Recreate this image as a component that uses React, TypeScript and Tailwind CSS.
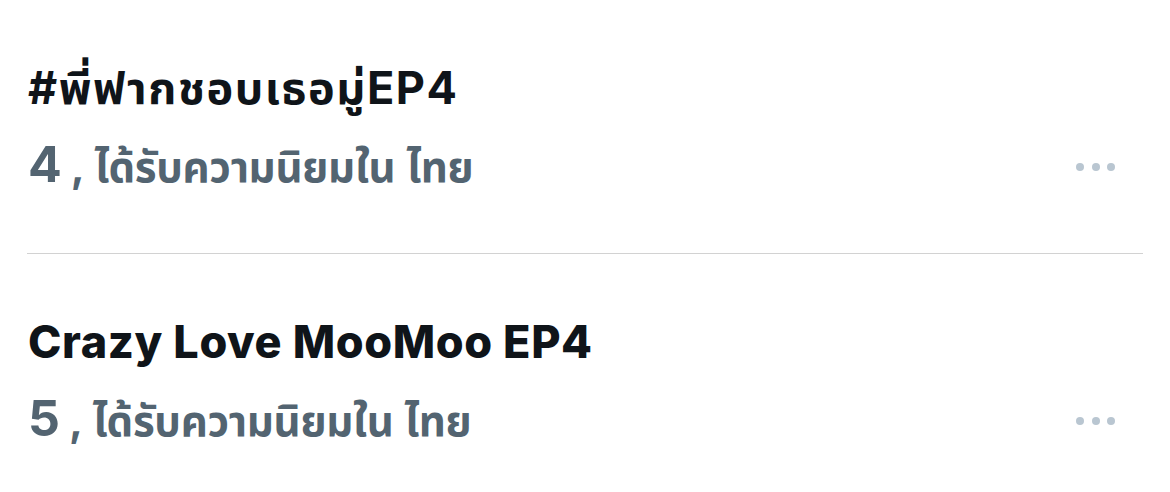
import React from "react";

type Trend = { rank: number; title: string; place: string; thai: boolean };

const trends: Trend[] = [
  { rank: 4, title: "#พี่ฟากชอบเธอมู่EP4", place: "ไทย", thai: true },
  { rank: 5, title: "Crazy Love MooMoo EP4", place: "ไทย", thai: false },
];

const font = {
  fontFamily:
    'Inter, "Noto Sans", "Noto Sans Thai", "Liberation Sans", sans-serif',
};

function MoreDots() {
  return (
    <div className="flex items-center gap-[7.5px]">
      <span className="block h-[8px] w-[8px] rounded-full bg-[#b9c6d1]" />
      <span className="block h-[8px] w-[8px] rounded-full bg-[#b9c6d1]" />
      <span className="block h-[8px] w-[8px] rounded-full bg-[#b9c6d1]" />
    </div>
  );
}

function TrendRow({ trend }: { trend: Trend }) {
  return (
    <div className="flex h-[253px] items-start pl-[28px] pr-[55px] pt-[49px]">
      <div className="flex min-w-0 flex-1 flex-col">
        <div
          className={
            trend.thai
              ? "h-[77px] whitespace-nowrap text-[45px] font-bold leading-[77px] tracking-[1.6px] text-[#0f1419]"
              : "h-[77px] whitespace-nowrap text-[45px] font-extrabold leading-[77px] tracking-[0.6px] text-[#0f1419]"
          }
        >
          {trend.title}
        </div>
        <div className="flex h-[77px] items-baseline whitespace-nowrap text-[42px] font-bold leading-[77px] tracking-[-0.3px] text-[#536471]">
          <span className="text-[50px] tracking-normal">{trend.rank}</span>
          <span className="ml-[9px]">,</span>
          <span className="ml-[10px]">ได้รับความนิยมใน</span>
          <span className="ml-[11px]">{trend.place}</span>
        </div>
      </div>
      <div className="mt-[114px]">
        <MoreDots />
      </div>
    </div>
  );
}

export default function App() {
  return (
    <div className="h-[492px] w-[1170px] overflow-hidden bg-white" style={font}>
      <TrendRow trend={trends[0]} />
      <div className="ml-[27px] mr-[27px] h-[1px] bg-[#d2d2d2]" />
      <TrendRow trend={trends[1]} />
    </div>
  );
}
